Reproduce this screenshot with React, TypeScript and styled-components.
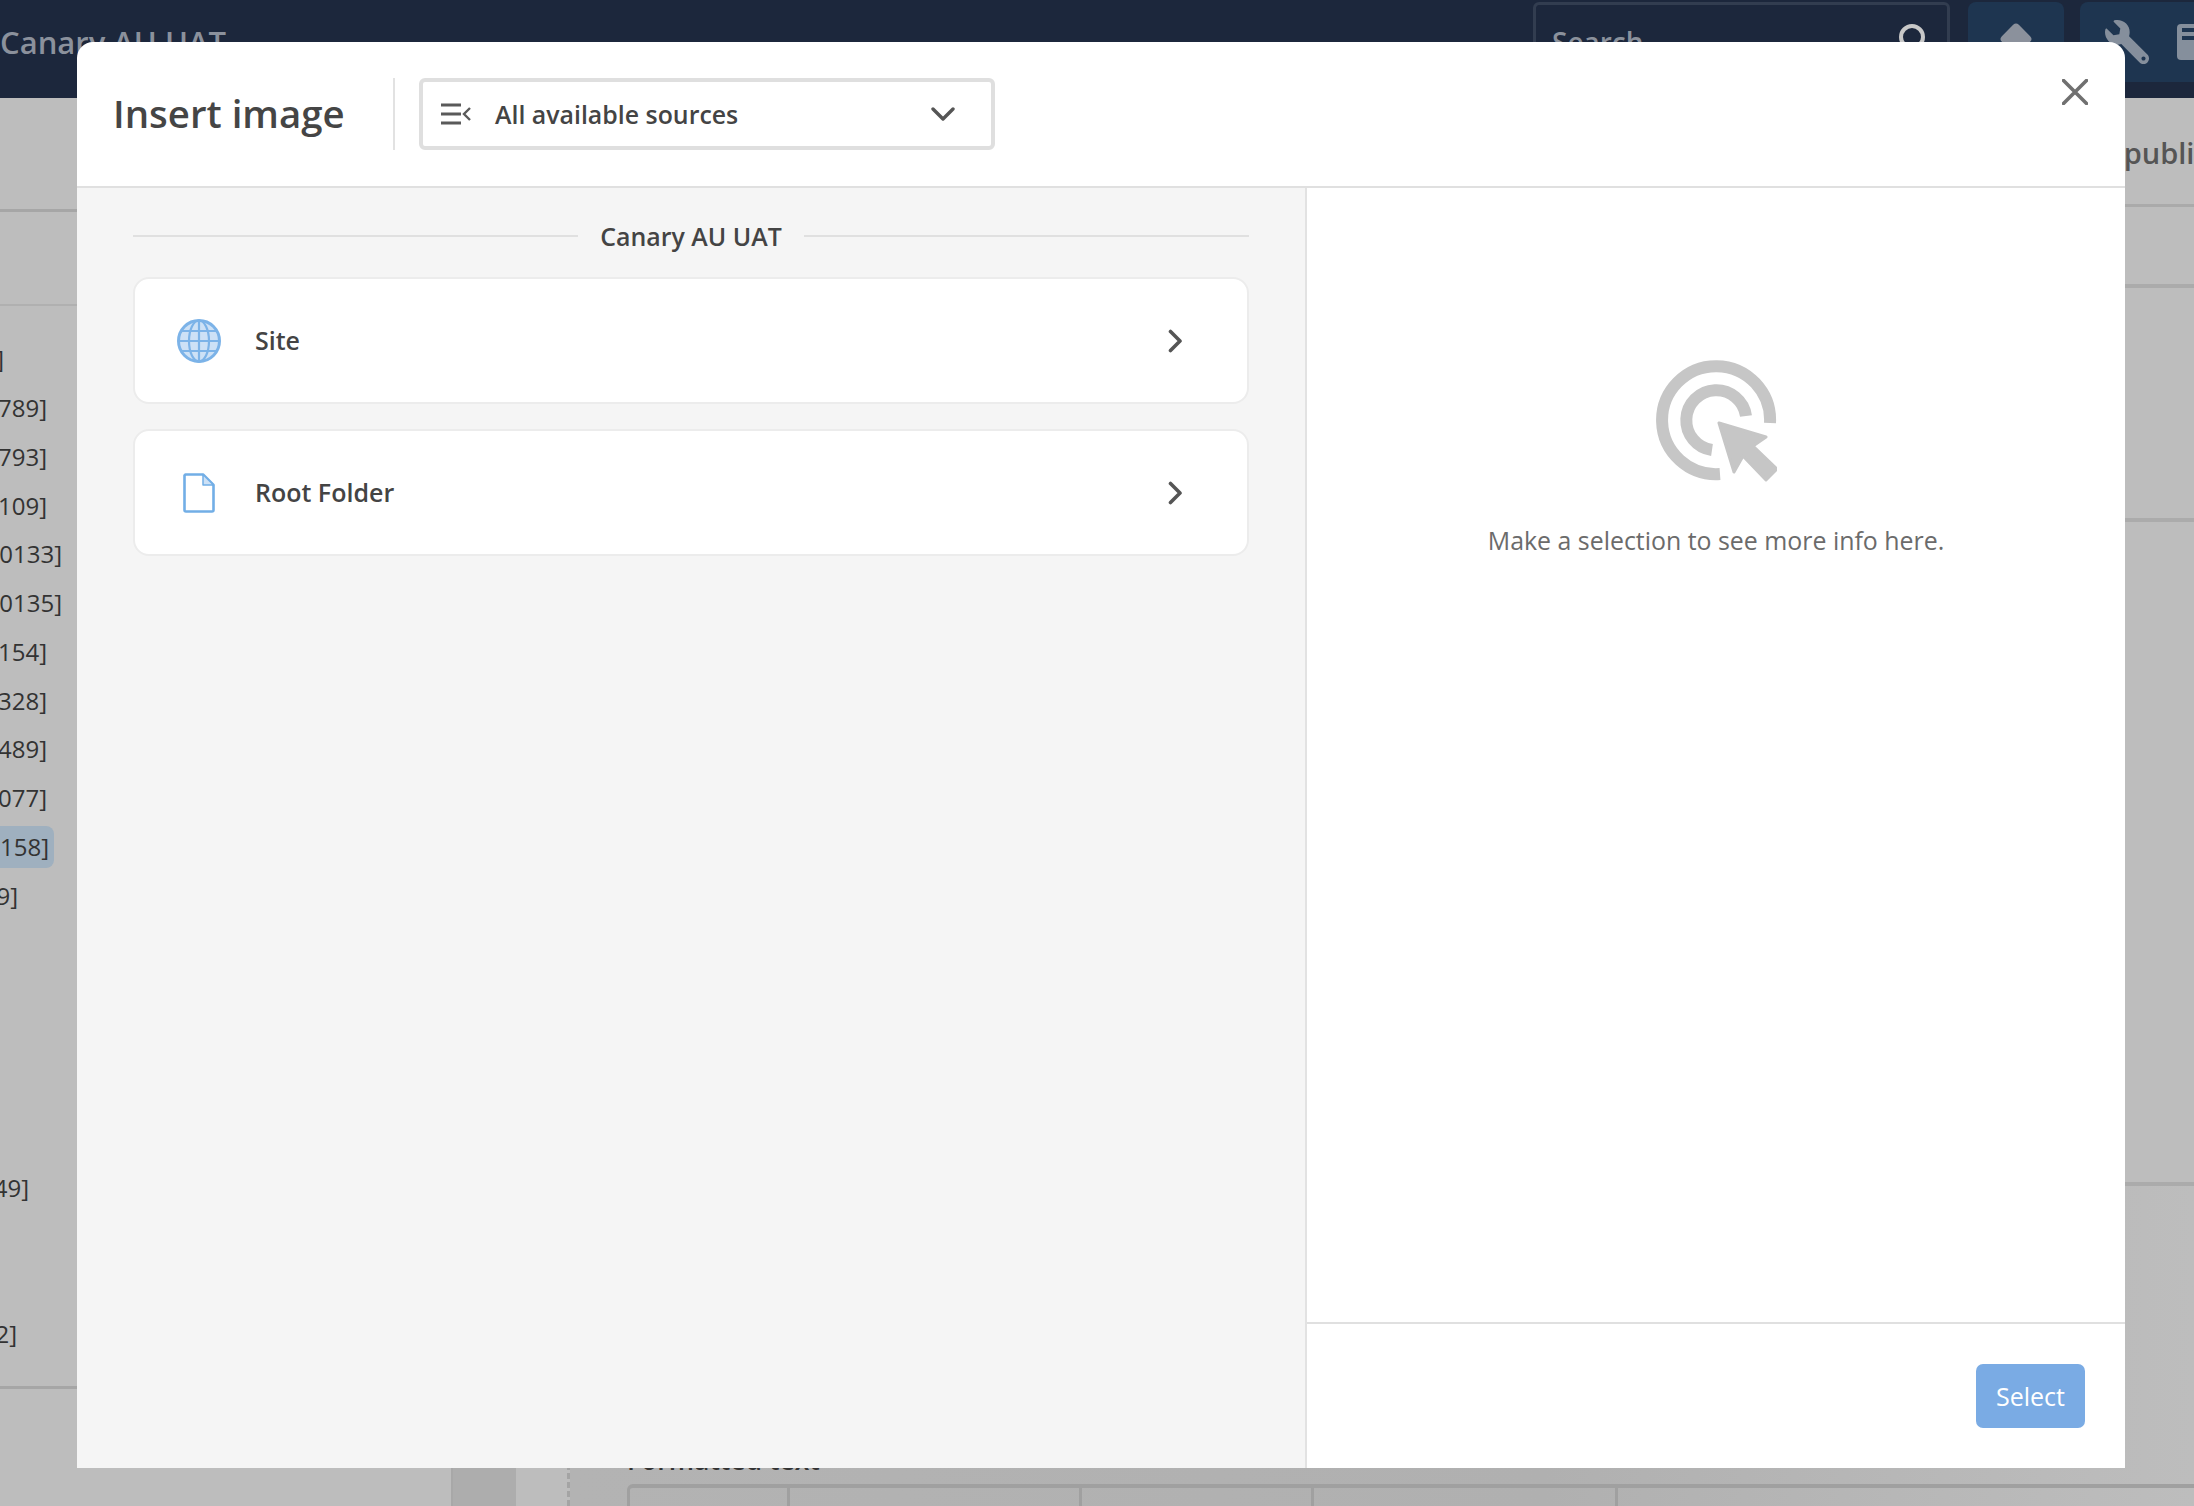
import React from "react";
import styled, { createGlobalStyle } from "styled-components";
import { FaWrench } from "react-icons/fa";

const Global = createGlobalStyle`
  html, body { margin: 0; padding: 0; background: #bdbdbd; }
  * { box-sizing: border-box; }
  body { font-family: "Open Sans", "Liberation Sans", sans-serif; }
`;

const Page = styled.div`
  position: relative;
  width: 2194px;
  height: 1506px;
  overflow: hidden;
  background: #bdbdbd;
  display: flex;
  flex-direction: column;
`;

/* ---------- dimmed page behind the dialog ---------- */
const TopBar = styled.header`
  height: 98px;
  flex: none;
  background: #1c273c;
  display: flex;
  align-items: flex-start;
  padding-top: 2px;
`;
const Brand = styled.div`
  font-size: 31px;
  line-height: 80px;
  font-weight: 600;
  color: #8b919c;
  white-space: nowrap;
`;
const SearchBox = styled.div`
  margin-left: auto;
  width: 417px;
  height: 80px;
  border: 3px solid #323d50;
  border-radius: 6px;
  display: flex;
  align-items: center;
  justify-content: space-between;
  padding: 0 20px 0 16px;
  font-size: 28px;
  font-weight: 600;
  color: #8b919c;
`;
const BarButton = styled.div<{ $w: number }>`
  width: ${(p) => p.$w}px;
  height: 80px;
  margin-left: 18px;
  background: #1e3550;
  border-radius: 8px;
  display: flex;
  align-items: center;
  justify-content: center;
  flex: none;
`;
const LastButton = styled(BarButton)`
  margin-left: 16px;
  justify-content: flex-start;
  gap: 28px;
  padding-left: 25px;
  border-radius: 8px 0 0 8px;
  color: #858f9c;
  & > svg {
    flex: none;
  }
`;
const Under = styled.div`
  flex: 1;
  display: flex;
  min-height: 0;
`;
const Sidebar = styled.aside`
  width: 453px;
  flex: none;
  display: flex;
  flex-direction: column;
  border-right: 2px solid #a8a8a8;
`;
const SideHead = styled.div`
  height: 114px;
  flex: none;
  border-bottom: 3px solid #a6a6a6;
`;
const SideTabs = styled.div`
  height: 94px;
  flex: none;
  border-bottom: 2px solid #b0b0b0;
`;
const TreeList = styled.div`
  padding-top: 29px;
  height: 1083px;
  flex: none;
  border-bottom: 3px solid #a6a6a6;
`;
const TreeRow = styled.div<{ $w: number }>`
  width: ${(p) => p.$w}px;
  height: 48.75px;
  display: flex;
  justify-content: flex-end;
  align-items: center;
  font-size: 24px;
  color: #333;
  white-space: nowrap;
`;
const TreeText = styled.span<{ $sel?: boolean }>`
  padding: 0 ${(p) => (p.$sel ? "5px" : "0")} 0 0;
  background: ${(p) => (p.$sel ? "#9fb0bf" : "transparent")};
  border-radius: 0 8px 8px 0;
  height: 42px;
  line-height: 42px;
  flex: none;
  width: ${(p) => (p.$sel ? "54px" : "auto")};
`;
const Main = styled.main`
  flex: 1;
  min-width: 0;
  display: flex;
  flex-direction: column;
`;
const MainHead = styled.div`
  height: 109px;
  flex: none;
  display: flex;
  justify-content: flex-end;
  align-items: center;
  padding-top: 2px;
  border-bottom: 3px solid #aaa;
  overflow: hidden;
`;
const HeadText = styled.div`
  font-size: 29px;
  font-weight: 600;
  color: #555;
  white-space: nowrap;
  flex: none;
  margin-right: -33px;
`;
const Strip = styled.div<{ $h: number }>`
  height: ${(p) => p.$h}px;
  flex: none;
  border-bottom: 4px solid #ababab;
`;
const Workspace = styled.div`
  flex: 1;
  display: flex;
  min-height: 0;
`;
const DarkColumn = styled.div`
  width: 63px;
  flex: none;
  background: #adadad;
`;
const DashedLine = styled.div`
  width: 54px;
  flex: none;
  border-right: 3px dashed #a4a4a4;
`;
const Editor = styled.div`
  flex: 1;
  padding: 258px 0 0 57px;
  display: flex;
  flex-direction: column;
  background: linear-gradient(90deg, #b3b3b3 0%, #b0b0b0 60%, #bdbdbd 100%);
`;
const FieldLabel = styled.div`
  font-size: 26.5px;
  line-height: 32px;
  font-weight: 600;
  color: #333;
  margin-bottom: 8px;
`;
const TableRow = styled.div`
  display: flex;
  height: 30px;
  border-top: 4px solid #a0a0a0;
  border-left: 3px solid #a0a0a0;
  border-radius: 6px 0 0 0;
`;
const TableCell = styled.div<{ $w: number }>`
  width: ${(p) => p.$w}px;
  flex: none;
  border-right: 3px solid #a0a0a0;
`;

/* ---------- dialog ---------- */
const Dialog = styled.section`
  position: absolute;
  left: 77px;
  top: 42px;
  width: 2048px;
  height: 1426px;
  background: #fff;
  border-radius: 16px 16px 0 0;
  display: flex;
  flex-direction: column;
  overflow: hidden;
  color: #444;
`;
const DialogHead = styled.div`
  height: 146px;
  flex: none;
  display: flex;
  align-items: flex-start;
  padding: 36px 0 0 36px;
  border-bottom: 2px solid #e0e0e0;
`;
const Title = styled.h1`
  margin: 0;
  width: 230px;
  height: 72px;
  line-height: 70px;
  font-size: 38.4px;
  font-weight: 600;
  color: #454545;
  white-space: nowrap;
`;
const HeadDivider = styled.div`
  width: 2px;
  height: 72px;
  margin: 0 24px 0 50px;
  background: #e2e2e2;
`;
const SourceSelect = styled.div`
  width: 576px;
  height: 72px;
  border: 4px solid #dfdfdf;
  border-radius: 6px;
  display: flex;
  align-items: center;
  padding: 0 36px 0 18px;
  font-size: 24.9px;
  font-weight: 600;
  color: #444;
`;
const SourceText = styled.span`
  margin-left: 24px;
  flex: 1;
`;
const CloseButton = styled.div`
  margin: 1px 37px 0 auto;
  width: 26px;
  height: 26px;
  line-height: 0;
`;
const DialogBody = styled.div`
  flex: 1;
  display: flex;
  min-height: 0;
`;
const Browser = styled.div`
  width: 1230px;
  flex: none;
  background: #f5f5f5;
  border-right: 2px solid #e2e2e2;
  padding: 0 56px 0 56px;
  display: flex;
  flex-direction: column;
`;
const SectionTitle = styled.div`
  height: 89px;
  flex: none;
  display: flex;
  align-items: center;
  gap: 22px;
  padding-top: 7px;
  font-size: 24.9px;
  font-weight: 600;
  color: #444;
  &::before,
  &::after {
    content: "";
    flex: 1;
    height: 2px;
    background: #e0e0e0;
  }
`;
const CardList = styled.div`
  display: flex;
  flex-direction: column;
  gap: 25px;
`;
const Card = styled.div`
  height: 127px;
  background: #fff;
  border: 2px solid #ececec;
  border-radius: 16px;
  display: flex;
  align-items: center;
  font-size: 25px;
  font-weight: 600;
  color: #444;
  padding-right: 65px;
`;
const CardIcon = styled.div<{ $pad: number }>`
  width: 120px;
  padding-left: ${(p) => p.$pad}px;
  flex: none;
  display: flex;
  line-height: 0;
`;
const CardLabel = styled.span`
  flex: 1;
  padding-bottom: 2px;
`;
const Details = styled.div`
  flex: 1;
  min-width: 0;
  display: flex;
  flex-direction: column;
`;
const Empty = styled.div`
  flex: 1;
  display: flex;
  flex-direction: column;
  align-items: center;
  padding-top: 172px;
  border-bottom: 2px solid #e0e0e0;
`;
const EmptyText = styled.p`
  margin: 40px 0 0;
  font-size: 24.9px;
  line-height: 36px;
  color: #6b6b6b;
`;
const Footer = styled.div`
  height: 144px;
  flex: none;
  display: flex;
  align-items: flex-start;
  justify-content: flex-end;
  padding: 40px 40px 0 0;
`;
const SelectButton = styled.button`
  width: 109px;
  height: 64px;
  border: 0;
  border-radius: 7px;
  background: #7aabe4;
  color: #fff;
  font-family: inherit;
  font-size: 25px;
  padding: 0;
`;

const Diamond = () => (
  <svg width="36" height="36" viewBox="0 0 36 36" style={{ marginTop: -6 }}>
    <rect x="6" y="6" width="24" height="24" rx="4" transform="rotate(45 18 18)" fill="#8b919c" />
  </svg>
);
const SearchIcon = () => (
  <svg width="30" height="40" viewBox="0 0 30 40">
    <circle cx="15" cy="15" r="11" fill="none" stroke="#c8c8c8" strokeWidth="4" />
  </svg>
);
const WrenchIcon = () => <FaWrench size={44} style={{ transform: "scaleX(-1)" }} />;
const PanelIcon = () => (
  <svg width="40" height="36" viewBox="0 0 40 36">
    <rect width="40" height="36" rx="4" fill="#858f9c" />
    <rect x="5" y="4" width="35" height="4" fill="#1e3550" />
    <rect x="5" y="12" width="35" height="4" fill="#1e3550" />
  </svg>
);
const SourcesIcon = () => (
  <svg width="30" height="22" viewBox="0 0 30 22">
    <path d="M0 2h20M0 11h20M0 20h20" stroke="#5a5a5a" strokeWidth="3" fill="none" />
    <path d="M29 5l-6 6 6 6" stroke="#5a5a5a" strokeWidth="2.4" fill="none" />
  </svg>
);
const ChevronDown = () => (
  <svg width="24" height="14" viewBox="0 0 24 14">
    <path d="M2 2l10 10L22 2" stroke="#555" strokeWidth="3.4" fill="none" strokeLinecap="round" strokeLinejoin="round" />
  </svg>
);
const ChevronRight = () => (
  <svg width="14" height="24" viewBox="0 0 14 24">
    <path d="M2.5 2.500l9.500 9.500-9.500 9.500" stroke="#555" strokeWidth="3.6" fill="none" strokeLinecap="round" strokeLinejoin="round" />
  </svg>
);
const CloseIcon = () => (
  <svg width="26" height="26" viewBox="0 0 26 26">
    <path d="M1.5 1.5l23 23M24.5 1.5l-23 23" stroke="#707070" strokeWidth="3.6" fill="none" strokeLinecap="round" />
  </svg>
);
const GlobeIcon = () => (
  <svg width="44" height="44" viewBox="0 0 44 44">
    <circle cx="22" cy="22" r="20.5" fill="#cde1f6" stroke="#7cb3e8" strokeWidth="3" />
    <g fill="none" stroke="#7cb3e8" strokeWidth="2.200">
      <ellipse cx="22" cy="22" rx="10" ry="20.5" />
      <path d="M22 1.5v41M1.5 22h41M4.5 12h35M4.5 32h35" />
    </g>
  </svg>
);
const DocIcon = () => (
  <svg width="32" height="40" viewBox="0 0 32 40">
    <path d="M2.5 1.5H20L30.5 12v25a1.5 1.5 0 0 1-1.5 1.5H3A1.5 1.5 0 0 1 1.500 37V2.500z" fill="#fff" stroke="#72aee6" strokeWidth="2.600" strokeLinejoin="round" />
    <path d="M20 1.500L30.500 12H20z" fill="#cde1f6" stroke="#72aee6" strokeWidth="1.500" strokeLinejoin="round" />
  </svg>
);
const TargetCursorIcon = () => (
  <svg width="121" height="122" viewBox="36 20 121 122">
    <g fill="none" stroke="#c6c6c6" strokeWidth="12">
      <path d="M100 134A54 54 0 1 1 150 83" />
      <path d="M92 110A30 30 0 1 1 126 76" />
    </g>
    <path
      d="M99 83l47 14-13 9 24 23-11 11-23-24-9 16z"
      fill="#c6c6c6"
      stroke="#c6c6c6"
      strokeWidth="3"
      strokeLinejoin="round"
    />
  </svg>
);

const rows: { t: string; w: number; sel?: boolean }[] = [
  { t: "]", w: 4 },
  { t: "789]", w: 47 },
  { t: "793]", w: 47 },
  { t: "109]", w: 47 },
  { t: "0133]", w: 62 },
  { t: "0135]", w: 62 },
  { t: "154]", w: 47 },
  { t: "328]", w: 47 },
  { t: "489]", w: 47 },
  { t: "077]", w: 47 },
  { t: "158]", w: 54, sel: true },
  { t: "9]", w: 18 },
  { t: "", w: 1 },
  { t: "", w: 1 },
  { t: "", w: 1 },
  { t: "", w: 1 },
  { t: "", w: 1 },
  { t: "49]", w: 29 },
  { t: "", w: 1 },
  { t: "", w: 1 },
  { t: "2]", w: 17 },
];

export default function App() {
  return (
    <Page>
      <Global />
      <TopBar>
        <Brand>Canary AU UAT</Brand>
        <SearchBox>
          Search
          <SearchIcon />
        </SearchBox>
        <BarButton $w={96}>
          <Diamond />
        </BarButton>
        <LastButton $w={114}>
          <WrenchIcon />
          <PanelIcon />
        </LastButton>
      </TopBar>
      <Under>
        <Sidebar>
          <SideHead />
          <SideTabs />
          <TreeList>
            {rows.map((r, i) => (
              <TreeRow key={i} $w={r.w}>
                <TreeText $sel={r.sel}>{r.t}</TreeText>
              </TreeRow>
            ))}
          </TreeList>
        </Sidebar>
        <Main>
          <MainHead>
            <HeadText>Unpublish</HeadText>
          </MainHead>
          <Strip $h={81} />
          <Strip $h={234} />
          <Strip $h={664} />
          <Workspace>
            <DarkColumn />
            <DashedLine />
            <Editor>
              <FieldLabel>Formatted text</FieldLabel>
              <TableRow>
                <TableCell $w={160} />
                <TableCell $w={292} />
                <TableCell $w={232} />
                <TableCell $w={304} />
              </TableRow>
            </Editor>
          </Workspace>
        </Main>
      </Under>

      <Dialog>
        <DialogHead>
          <Title>Insert image</Title>
          <HeadDivider />
          <SourceSelect>
            <SourcesIcon />
            <SourceText>All available sources</SourceText>
            <ChevronDown />
          </SourceSelect>
          <CloseButton>
            <CloseIcon />
          </CloseButton>
        </DialogHead>
        <DialogBody>
          <Browser>
            <SectionTitle>Canary AU UAT</SectionTitle>
            <CardList>
              <Card>
                <CardIcon $pad={42}>
                  <GlobeIcon />
                </CardIcon>
                <CardLabel>Site</CardLabel>
                <ChevronRight />
              </Card>
              <Card>
                <CardIcon $pad={48}>
                  <DocIcon />
                </CardIcon>
                <CardLabel>Root Folder</CardLabel>
                <ChevronRight />
              </Card>
            </CardList>
          </Browser>
          <Details>
            <Empty>
              <TargetCursorIcon />
              <EmptyText>Make a selection to see more info here.</EmptyText>
            </Empty>
            <Footer>
              <SelectButton>Select</SelectButton>
            </Footer>
          </Details>
        </DialogBody>
      </Dialog>
    </Page>
  );
}
